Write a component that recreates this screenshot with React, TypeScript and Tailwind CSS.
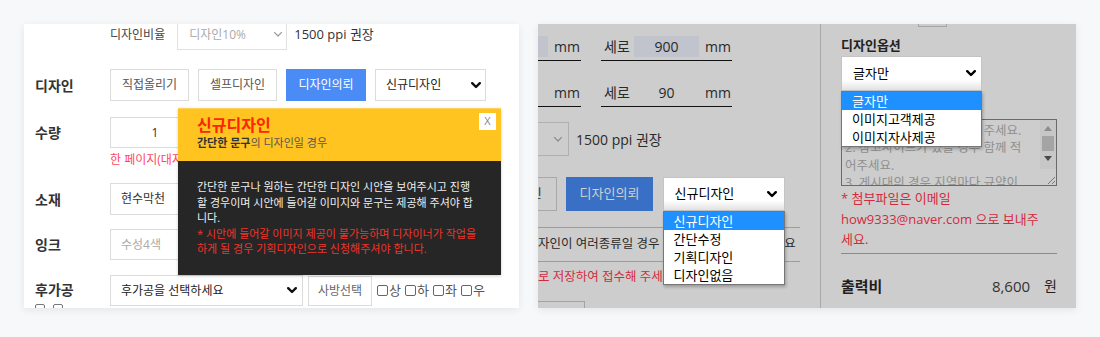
import React from 'react';

const Chevron: React.FC<{ bold?: boolean; className?: string }> = ({ bold, className }) => (
  <svg width="10" height="7" viewBox="0 0 10 7" fill="none" className={className}>
    <polyline
      points="1.2,1.2 5,5 8.8,1.2"
      stroke="currentColor"
      strokeWidth={bold ? 2.4 : 1.2}
      strokeLinecap={bold ? 'round' : 'butt'}
      strokeLinejoin="round"
    />
  </svg>
);

const Label: React.FC<{ children: React.ReactNode }> = ({ children }) => (
  <div className="w-[75px] h-[31px] flex items-center text-[14px] font-bold text-[#333]">{children}</div>
);

const Check: React.FC<{ children: React.ReactNode }> = ({ children }) => (
  <span className="flex items-center text-[13px] text-[#555]">
    <span className="w-[11px] h-[11px] border border-[#666] rounded-[2px] mr-[1px]" />
    {children}
  </span>
);

const Dim: React.FC<{ label: string; value: string; fill?: boolean }> = ({ label, value, fill }) => (
  <div className="flex items-center w-[131px] h-[28px] border-b border-[#111] pl-[3px] shrink-0">
    <span className="w-[28px] text-[14px]">{label}</span>
    <span
      className={`ml-[2px] w-[65px] h-[21px] flex items-center justify-center text-[14px] ${fill ? 'bg-[#c1c3cd]' : ''}`}
    >
      {value}
    </span>
    <span className="ml-[6px] text-[14px]">mm</span>
  </div>
);

const OptionList: React.FC<{ items: string[] }> = ({ items }) => (
  <div className="absolute left-0 top-full w-full z-10 bg-white border border-[#767676] shadow-[1px_2px_3px_rgba(0,0,0,0.25)] text-[13px] text-black">
    {items.map((it, i) => (
      <div
        key={it}
        className={`h-[18px] leading-[18px] pl-[10px] ${i === 0 ? 'bg-[#1e90ff] text-white' : ''}`}
      >
        {it}
      </div>
    ))}
  </div>
);

const LeftPanel: React.FC = () => (
  <div className="relative w-[495px] h-[284px] bg-white overflow-hidden shadow-[0_2px_8px_rgba(0,0,0,0.08)] shrink-0">
    <div className="pl-[11px] -mt-[5px] text-[12px] text-[#333]">
      {/* 디자인비율 */}
      <div className="flex items-center h-[31px] pl-[75px]">
        <span className="text-[#444]">디자인비율</span>
        <div className="ml-[12px] w-[110px] h-[31px] border border-[#e2e2e2] flex items-center justify-between pl-[11px] pr-[3px] text-[#aaa]">
          디자인10%
          <Chevron className="text-[#999]" />
        </div>
        <span className="ml-[7px] text-[13px]">1500 ppi 권장</span>
      </div>

      {/* 디자인 */}
      <div className="flex items-center mt-[19px] h-[32px]">
        <Label>디자인</Label>
        <div className="flex gap-[9px]">
          <div className="w-[79px] h-[32px] border border-[#dcdcdc] flex items-center justify-center text-[#555]">직접올리기</div>
          <div className="w-[79px] h-[32px] border border-[#dcdcdc] flex items-center justify-center text-[#555]">셀프디자인</div>
          <div className="w-[80px] h-[32px] bg-[#4a8bf5] flex items-center justify-center text-white">디자인의뢰</div>
          <div className="w-[111px] h-[32px] border border-[#dcdcdc] flex items-center justify-between pl-[10px] pr-[4px] text-[#222]">
            신규디자인
            <Chevron bold className="text-[#111]" />
          </div>
        </div>
      </div>

      {/* 수량 */}
      <div className="flex items-start mt-[16px]">
        <Label>수량</Label>
        <div>
          <div className="w-[90px] h-[31px] border border-[#dcdcdc] flex items-center justify-center">1</div>
          <div className="mt-[4px] leading-[16px] text-[#ff4766] whitespace-nowrap">한 페이지(대지)당 수량입니다</div>
        </div>
      </div>

      {/* 소재 */}
      <div className="flex items-center mt-[15px]">
        <Label>소재</Label>
        <div className="w-[193px] h-[32px] border border-[#dcdcdc] flex items-center pl-[10px]">현수막천</div>
      </div>

      {/* 잉크 */}
      <div className="flex items-center mt-[14px]">
        <Label>잉크</Label>
        <div className="w-[193px] h-[31px] border border-[#dcdcdc] flex items-center pl-[10px] text-[#aaa]">수성4색</div>
      </div>

      {/* 후가공 */}
      <div className="flex items-start mt-[15px]">
        <div className="w-[75px]">
          <div className="h-[29px] flex items-center text-[14px] font-bold text-[#333]">후가공</div>
          <div className="flex gap-[8px]">
            <span className="w-[10px] h-[10px] border border-[#777] rounded-[2px]" />
            <span className="w-[10px] h-[10px] border border-[#777] rounded-[2px]" />
          </div>
        </div>
        <div className="flex items-center gap-[5px]">
          <div className="w-[193px] h-[31px] border border-[#dcdcdc] flex items-center justify-between pl-[10px] pr-[5px] text-[#222]">
            후가공을 선택하세요
            <Chevron bold className="text-[#111]" />
          </div>
          <div className="w-[64px] h-[30px] border border-[#dcdcdc] flex items-center justify-center text-[#666]">사방선택</div>
          <div className="flex gap-[4px]">
            <Check>상</Check>
            <Check>하</Check>
            <Check>좌</Check>
            <Check>우</Check>
          </div>
        </div>
      </div>
    </div>

    {/* 안내 팝업 */}
    <div className="absolute left-[154px] top-[84px] w-[323px] h-[167px] flex flex-col shadow-[0_1px_3px_rgba(0,0,0,0.2)]">
      <div className="relative h-[53px] bg-[#ffc41f] pt-[7px] pl-[19px] border-t border-[#ffd45c]">
        <div className="text-[16px] leading-[19px] font-bold text-[#ff2400]">신규디자인</div>
        <div className="mt-[1px] text-[11px] leading-[14px] text-[#555]">
          <b className="text-[#333]">간단한 문구</b>의 디자인일 경우
        </div>
        <div className="absolute right-[5px] top-[4px] w-[17px] h-[17px] bg-white flex items-center justify-center text-[11px] text-[#888]">
          X
        </div>
      </div>
      <div className="flex-1 bg-[#262626] pt-[18px] pl-[19px] text-[11px] leading-[15.5px] whitespace-nowrap">
        <div className="text-[#eee]">
          간단한 문구나 원하는 간단한 디자인 시안을 보여주시고 진행
          <br />할 경우이며 시안에 들어갈 이미지와 문구는 제공해 주셔야 합
          <br />니다.
        </div>
        <div className="text-[#f0342a]">
          * 시안에 들어갈 이미지 제공이 불가능하며 디자이너가 작업을
          <br />하게 될 경우 기획디자인으로 신청해주셔야 합니다.
        </div>
      </div>
    </div>
  </div>
);

const RightPanel: React.FC = () => (
  <div className="w-[538px] h-[284px] bg-[#cdcdcd] overflow-hidden flex shadow-[0_2px_8px_rgba(0,0,0,0.08)] shrink-0 text-[12.5px] text-[#2a2a2a]">
    {/* 왼쪽 영역 */}
    <div className="w-[283px] shrink-0 border-r border-[#a9a9a9] overflow-hidden">
      <div className="flex gap-[20px] mt-[9px] -ml-[88px]">
        <Dim label="가로" value="1200" fill />
        <Dim label="세로" value="900" fill />
      </div>
      <div className="flex gap-[20px] mt-[18px] -ml-[88px]">
        <Dim label="가로" value="120" />
        <Dim label="세로" value="90" />
      </div>

      <div className="flex items-center mt-[15px] h-[34px] -ml-[88px]">
        <div className="w-[119px] h-[34px] shrink-0 border border-[#b0b0b0] flex items-center justify-end pr-[5px] text-[#8a8a8a]">
          <Chevron />
        </div>
        <span className="ml-[7px] text-[14px] whitespace-nowrap">1500 ppi 권장</span>
      </div>

      <div className="flex mt-[21px] h-[34px] -ml-[165px] gap-[9.5px]">
        <div className="w-[87px] shrink-0 border border-[#a8a8a8] flex items-center justify-center">직접올리기</div>
        <div className="w-[87px] shrink-0 border border-[#a8a8a8] flex items-center justify-center">셀프디자인</div>
        <div className="w-[87px] shrink-0 bg-[#3a6fc6] flex items-center justify-center text-[13px] text-[#d0d0d0]">디자인의뢰</div>
        <div className="relative w-[122px] shrink-0">
          <div className="h-[34px] border border-[#c4c4c4] bg-linear-to-b from-white from-70% to-[#e2e2e2] flex items-center justify-between pl-[11px] pr-[7px] text-[13px] text-black">
            신규디자인
            <Chevron bold />
          </div>
          <OptionList items={['신규디자인', '간단수정', '기획디자인', '디자인없음']} />
        </div>
      </div>

      <div className="mt-[16px] mr-[20px] h-[35px] border-y border-[#9c9c9c] flex items-center whitespace-nowrap">
        자인이 여러종류일 경우 각각의 파일로 올려주세요
      </div>
      <div className="mt-[6px] leading-[18px] text-[#d42a3c] whitespace-nowrap">로 저장하여 접수해 주세요.</div>
      <div className="mt-[15px] -ml-[1px] w-[48px] h-[20px] border border-[#a3a3a3]" />
    </div>

    {/* 오른쪽 영역 */}
    <div className="flex-1 pl-[20px] pr-[19px]">
      <div className="ml-[77px] w-[29px] h-[3px] border-x border-b border-[#a5a5a5]" />
      <div className="mt-[9px] leading-[18px] text-[13px] font-bold text-[#222]">디자인옵션</div>
      <div className="relative mt-[2px] w-[141px]">
        <div className="h-[35px] border border-[#c4c4c4] bg-linear-to-b from-white from-70% to-[#e2e2e2] flex items-center justify-between pl-[11px] pr-[5px] text-[13px] text-black">
          글자만
          <Chevron bold />
        </div>
        <OptionList items={['글자만', '이미지고객제공', '이미지자사제공']} />
      </div>

      <div className="mt-[28px] h-[67px] border border-[#6a6a6a] flex">
        <div className="flex-1 overflow-hidden pl-[3px] pt-[1.5px] text-[12.5px] leading-[17.5px] text-[#8f8f8f] whitespace-nowrap">
          1. 원하시는 문구를 꼭 적어주세요.
          <br />2. 참고사이트가 있을 경우 함께 적
          <br />어주세요.
          <br />3. 게시대의 경우 지역마다 규약이
        </div>
        <div className="w-[16px] flex flex-col items-center bg-[#c7c7c7]">
          <div className="h-[16px] flex items-center justify-center">
            <svg width="8" height="5" viewBox="0 0 8 5">
              <polygon points="0,5 4,0 8,5" fill="#8d8d8d" />
            </svg>
          </div>
          <div className="w-[12px] h-[15px] bg-[#a4a4a4]" />
          <div className="h-[14px] flex items-center justify-center">
            <svg width="8" height="5" viewBox="0 0 8 5">
              <polygon points="0,0 8,0 4,5" fill="#4a4a4a" />
            </svg>
          </div>
          <div className="flex-1" />
          <div className="w-[16px] h-[16px] flex items-end justify-end bg-[#cdcdcd]">
            <svg width="10" height="10" viewBox="0 0 10 10">
              <line x1="9" y1="2" x2="2" y2="9" stroke="#777" strokeWidth="1" />
              <line x1="9" y1="6" x2="6" y2="9" stroke="#777" strokeWidth="1" />
            </svg>
          </div>
        </div>
      </div>

      <div className="mt-[2px] text-[13px] leading-[20.5px] text-[#d42a3c] whitespace-nowrap">
        * 첨부파일은 이메일
        <br />how9333@naver.com 으로 보내주
        <br />세요.
      </div>
      <div className="mt-[3px] border-t border-[#8a8a8a]" />
      <div className="mt-[22px] flex items-center justify-between leading-[20px]">
        <span className="text-[15px] font-bold text-[#1f1f1f]">출력비</span>
        <span className="flex items-center gap-[14px]">
          <span className="text-[15px] text-[#333]">8,600</span>
          <span className="text-[14px] text-[#222]">원</span>
        </span>
      </div>
    </div>
  </div>
);

export default function App() {
  return (
    <div className="w-[1100px] h-[337px] bg-[#f7f8fa] flex items-start pt-[24px] pl-[24px] gap-[19px] font-['Open_Sans','Noto_Sans_CJK_KR',sans-serif]">
      <LeftPanel />
      <RightPanel />
    </div>
  );
}
